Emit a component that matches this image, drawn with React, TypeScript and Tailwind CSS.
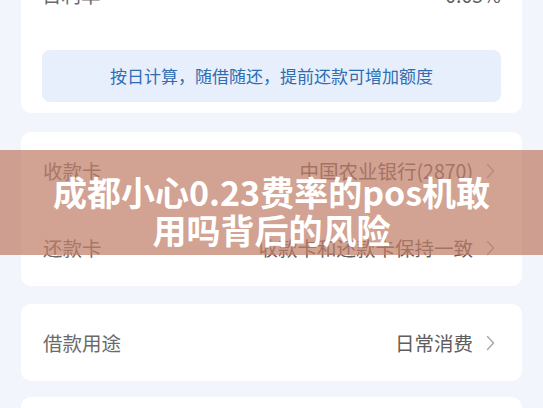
import React from "react";

const font = {
  fontFamily: '"Noto Sans CJK SC", "Noto Sans", sans-serif',
};

function Chevron() {
  return (
    <svg width="9" height="16" viewBox="0 0 9 16" className="shrink-0">
      <polyline
        points="1.5,1.5 7.5,8 1.5,14.5"
        fill="none"
        stroke="#a8a8a8"
        strokeWidth="1.4"
        strokeLinecap="round"
        strokeLinejoin="round"
      />
    </svg>
  );
}

function Row({ label, value }: { label: string; value: string }) {
  return (
    <div className="flex h-[77px] items-center justify-between pl-[22px] pr-[27px]">
      <span className="text-[19.5px] text-[#6a6a6a]">{label}</span>
      <div className="flex items-center gap-[13px]">
        <span className="text-[19.5px] text-[#5e5e5e]">{value}</span>
        <Chevron />
      </div>
    </div>
  );
}

export default function App() {
  return (
    <div
      className="relative h-[408px] w-[543px] overflow-hidden bg-[#f2f5fb]"
      style={font}
    >
      <div className="flex flex-col gap-[19px] px-[21px]">
        <div className="-mt-[40px] rounded-[10px] bg-white px-[21px] pb-[11px]">
          <div className="flex h-[70px] items-center justify-between">
            <span className="text-[19.5px] text-[#6a6a6a]">日利率</span>
            <span className="text-[19.5px] text-[#5e5e5e]">0.05%</span>
          </div>
          <div className="mt-[20px] flex h-[52px] items-center justify-center rounded-[8px] bg-[#e7effc]">
            <span className="text-[17px] text-[#2f6db3]">
              按日计算，随借随还，提前还款可增加额度
            </span>
          </div>
        </div>

        <div className="rounded-[10px] bg-white">
          <Row label="收款卡" value="中国农业银行(2870)" />
          <Row label="还款卡" value="收款卡和还款卡保持一致" />
        </div>

        <div className="-mt-px rounded-[10px] bg-white">
          <Row label="借款用途" value="日常消费" />
        </div>

        <div className="-mt-[3px] h-[60px] rounded-[10px] bg-white" />
      </div>

      <div className="absolute left-0 right-0 top-[150px] flex h-[105px] flex-col items-center justify-center bg-[rgba(192,124,101,0.71)] pt-[16px]">
        <p className="text-center text-[34px] font-bold leading-[38px] text-white">
          成都小心0.23费率的pos机敢
          <br />
          用吗背后的风险
        </p>
      </div>
    </div>
  );
}
